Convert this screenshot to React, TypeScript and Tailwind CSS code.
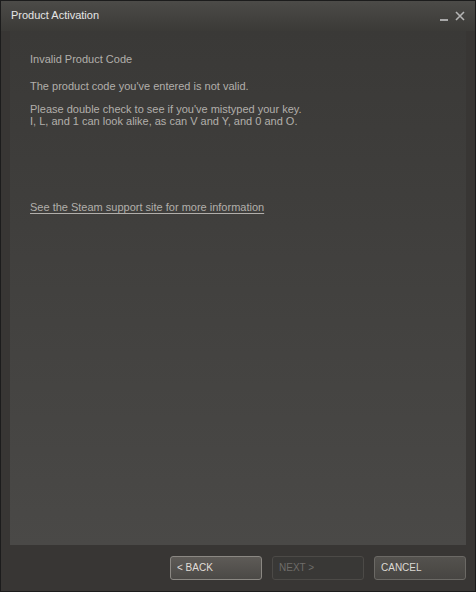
export default function App() {
  return (
    <div
      className="w-[476px] h-[592px] flex flex-col border border-[#1c1c1c] bg-[#383634] text-[11px] text-[#b2afab]"
      style={{ fontFamily: '"Liberation Sans", Arial, sans-serif' }}
    >
      {/* title bar */}
      <div className="h-[30px] shrink-0 flex items-start justify-between bg-gradient-to-b from-[#4c4b48] to-[#3b3a37] pl-[10px] pr-[10px]">
        <span className="mt-[7px] text-[#e6e6e6] leading-[14px]">Product Activation</span>
        <div className="flex items-start gap-[7px] mt-[9px]">
          <span className="mt-[9px] w-[8px] h-[2px] bg-[#a8a8a8]" />
          <svg width="10" height="10" viewBox="0 0 10 10" className="mt-[1px]">
            <path d="M1 1 L9 9 M9 1 L1 9" stroke="#b5b5b5" strokeWidth="1.6" />
          </svg>
        </div>
      </div>

      {/* content panel */}
      <div className="mx-[9px] h-[514px] bg-gradient-to-b from-[#3a3937] to-[#4a4947] pl-[20px] pt-[21px]">
        <p className="leading-[14px]">Invalid Product Code</p>
        <p className="mt-[13px] leading-[14px]">The product code you've entered is not valid.</p>
        <p className="mt-[10px] leading-[12px]">
          Please double check to see if you've mistyped your key.
          <br />
          I, L, and 1 can look alike, as can V and Y, and 0 and O.
        </p>
        <p className="mt-[73px] leading-[14px]">
          <span className="underline underline-offset-[2px]">See the Steam support site for more information</span>
        </p>
      </div>

      {/* footer buttons */}
      <div className="flex justify-end gap-[10px] pr-[9px] pt-[11px]">
        <button className="w-[92px] h-[24px] rounded-[3px] border border-[#8b8883] bg-gradient-to-b from-[#5e5b57] to-[#4b4946] text-left pl-[6px] pb-[1px] text-[10px] text-[#e0ddd8]">
          &lt; BACK
        </button>
        <button className="w-[92px] h-[24px] rounded-[3px] border border-[#4c4a47] bg-[#393836] text-left pl-[6px] pb-[1px] text-[10px] text-[#6e6c69]">
          NEXT &gt;
        </button>
        <button className="w-[92px] h-[24px] rounded-[3px] border border-[#6b6965] bg-gradient-to-b from-[#54524e] to-[#474542] text-left pl-[6px] pb-[1px] text-[10px] text-[#dcd9d4]">
          CANCEL
        </button>
      </div>
    </div>
  );
}
